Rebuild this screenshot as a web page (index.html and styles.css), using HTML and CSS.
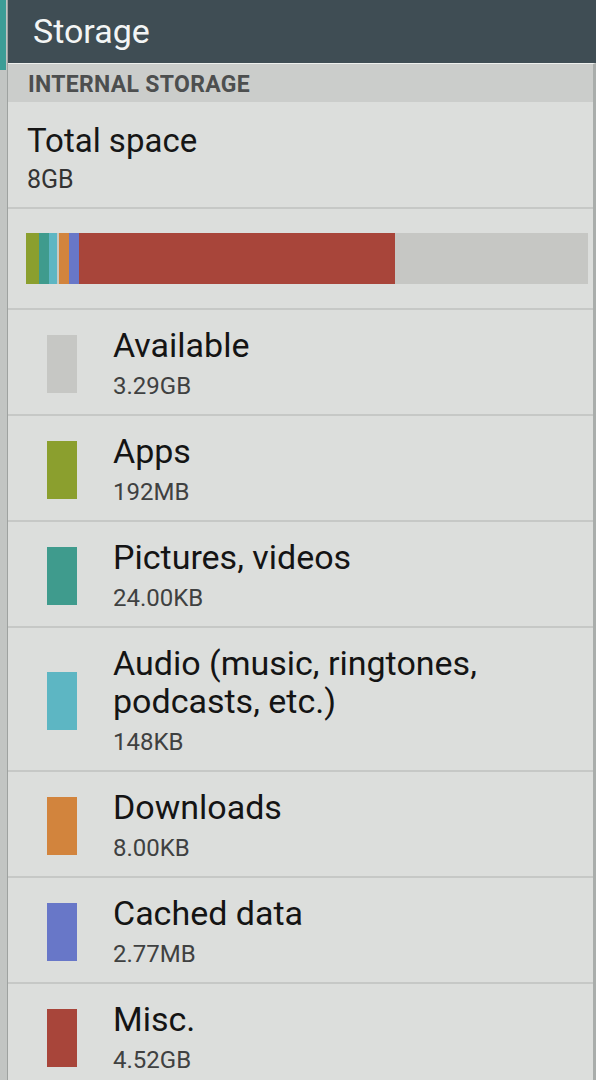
FILE: index.html
```html
<!DOCTYPE html>
<html lang="en">
<head>
<meta charset="utf-8">
<title>Storage</title>
<link rel="stylesheet" href="styles.css">
</head>
<body>
<div class="screen">
  <div class="gutter"><div class="gutter-accent"></div></div>
  <div class="main">
    <header class="appbar"><h1 class="appbar-title">Storage</h1></header>
    <div class="panel">
      <div class="section-head">INTERNAL STORAGE</div>
      <div class="total">
        <div class="total-title">Total space</div>
        <div class="total-value">8GB</div>
      </div>
      <div class="bar-row">
        <div class="bar">
          <span class="seg c-apps w-apps"></span>
          <span class="seg c-pics w-pics"></span>
          <span class="seg c-audio w-audio"></span>
          <span class="seg c-dl w-dl"></span>
          <span class="seg c-cache w-cache"></span>
          <span class="seg c-misc w-misc"></span>
          <span class="seg c-avail w-avail"></span>
        </div>
      </div>
      <ul class="list">
        <li class="item"><span class="swatch c-avail"></span><div class="text"><div class="title">Available</div><div class="sub">3.29GB</div></div></li>
        <li class="item"><span class="swatch c-apps"></span><div class="text"><div class="title">Apps</div><div class="sub">192MB</div></div></li>
        <li class="item"><span class="swatch c-pics"></span><div class="text"><div class="title">Pictures, videos</div><div class="sub">24.00KB</div></div></li>
        <li class="item"><span class="swatch c-audio"></span><div class="text"><div class="title">Audio (music, ringtones,<br>podcasts, etc.)</div><div class="sub">148KB</div></div></li>
        <li class="item"><span class="swatch c-dl"></span><div class="text"><div class="title">Downloads</div><div class="sub">8.00KB</div></div></li>
        <li class="item"><span class="swatch c-cache"></span><div class="text"><div class="title">Cached data</div><div class="sub">2.77MB</div></div></li>
        <li class="item"><span class="swatch c-misc"></span><div class="text"><div class="title">Misc.</div><div class="sub">4.52GB</div></div></li>
      </ul>
    </div>
  </div>
</div>
</body>
</html>
```
FILE: styles.css
```css
html, body {
  margin: 0;
  padding: 0;
  background: #d9dbd9;
}
body {
  font-family: Roboto, "Liberation Sans", sans-serif;
  color: #161616;
  width: 596px;
  height: 1080px;
  overflow: hidden;
}
.screen {
  display: flex;
  height: 1080px;
}
.gutter {
  width: 7px;
  flex: none;
  background: #c2c5c3;
  border-right: 1px solid #9ea2a0;
  display: flex;
  flex-direction: column;
}
.gutter-accent {
  height: 70px;
  width: 6px;
  flex: none;
  background: #3c9d96;
}
.main {
  flex: 1;
  display: flex;
  flex-direction: column;
  min-width: 0;
}
.appbar {
  flex: none;
  height: 63px;
  box-sizing: border-box;
  background: #3f4d54;
  display: flex;
  align-items: center;
  padding-left: 25px;
}
.appbar-title {
  margin: 0;
  font-weight: 400;
  font-size: 34px;
  color: #f3f5f5;
  padding-bottom: 2px;
}
.panel {
  flex: 1;
  background: #dcdedc;
  border-top: 1px solid #eef0ee;
  border-right: 3px solid #a9adab;
}
.section-head {
  height: 38px;
  background: #cbcdcb;
  font-weight: 700;
  font-size: 23px;
  letter-spacing: 0.3px;
  color: #4d4f4f;
  padding-left: 20px;
  display: flex;
  align-items: center;
  padding-top: 2px;
  box-sizing: border-box;
}
.total {
  height: 107px;
  box-sizing: border-box;
  padding: 20px 0 0 19px;
  border-bottom: 2px solid #c6c8c6;
}
.total-title {
  font-size: 33px;
  line-height: 38px;
}
.total-value {
  font-size: 25px;
  line-height: 30px;
  color: #333;
  margin-top: 5px;
}
.bar-row {
  height: 101px;
  box-sizing: border-box;
  padding: 24px 5px 0 18px;
  border-bottom: 2px solid #c6c8c6;
}
.bar {
  display: flex;
  height: 51px;
}
.seg { display: block; height: 100%; }
.w-apps { width: 13px; }
.w-pics { width: 10px; }
.w-audio { width: 8px; border-right: 2px solid #c9c9c2; }
.w-dl { width: 10px; }
.w-cache { width: 10px; }
.w-misc { width: 316px; }
.w-avail { flex: 1; }

.c-avail { background: #c6c7c4; }
.c-apps { background: #8b9f2e; }
.c-pics { background: #3f9b8d; }
.c-audio { background: #5db6c3; }
.c-dl { background: #d2843d; }
.c-cache { background: #6877c8; }
.c-misc { background: #a8453a; }

.list {
  list-style: none;
  margin: 0;
  padding: 0;
}
.item {
  display: flex;
  align-items: center;
  padding: 16px 0 13px 39px;
  border-bottom: 2px solid #c6c8c6;
}
.swatch {
  width: 30px;
  height: 58px;
  flex: none;
}
.text {
  margin-left: 36px;
}
.title {
  font-size: 34px;
  line-height: 38px;
  color: #141414;
}
.sub {
  font-size: 24px;
  line-height: 30px;
  color: #3f4141;
  margin-top: 7px;
}
```
